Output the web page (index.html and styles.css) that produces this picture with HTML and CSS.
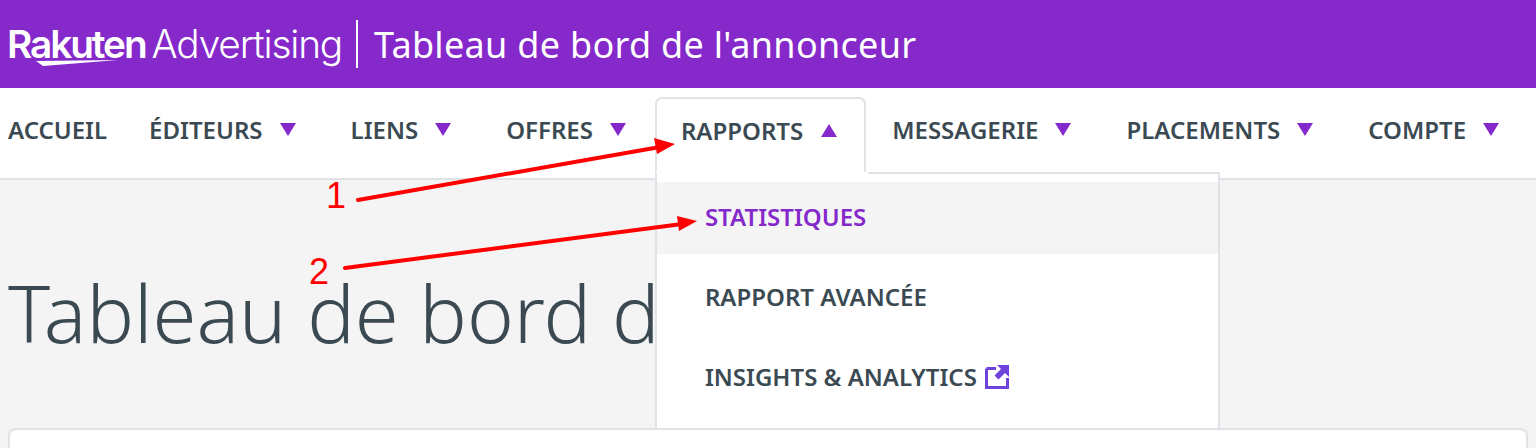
FILE: index.html
```html
<!DOCTYPE html>
<html lang="fr">
<head>
<meta charset="utf-8">
<title>Tableau de bord de l'annonceur</title>
<link rel="stylesheet" href="styles.css">
</head>
<body>
<header class="topbar">
  <div class="logo">
    <span class="logo-rakuten">Rakuten</span><span class="logo-adv">Advertising</span>
    <svg class="logo-swoosh" viewBox="0 0 82 7" width="82" height="7"><path d="M0 1 L82 0 L7 6 Z" fill="#fff"/></svg>
  </div>
  <div class="divider"></div>
  <div class="app-title">Tableau de bord de l'annonceur</div>
</header>
<nav class="nav">
  <a class="nav-item first">ACCUEIL</a>
  <a class="nav-item">ÉDITEURS<i class="caret"></i></a>
  <a class="nav-item">LIENS<i class="caret"></i></a>
  <a class="nav-item">OFFRES<i class="caret"></i></a>
  <div class="nav-item open">RAPPORTS<i class="caret up"></i>
    <div class="dropdown">
      <a class="drop-item active">STATISTIQUES</a>
      <a class="drop-item">RAPPORT AVANCÉE</a>
      <a class="drop-item">INSIGHTS &amp; ANALYTICS
        <svg class="ext" viewBox="0 0 24 24" width="24" height="24"><path d="M1.500 3.500H11M1.500 3.500V22.500H22.500V13" fill="none" stroke="#6f42dc" stroke-width="3"/><path d="M12 0H24V12L20 8L13.500 14.500L9.500 10.500L16 4Z" fill="#6f42dc"/></svg>
      </a>
    </div>
  </div>
  <a class="nav-item">MESSAGERIE<i class="caret"></i></a>
  <a class="nav-item">PLACEMENTS<i class="caret"></i></a>
  <a class="nav-item">COMPTE<i class="caret"></i></a>
</nav>
<main class="content">
  <h1 class="page-title">Tableau de bord de l'annonceur</h1>
  <section class="card"></section>
</main>
<svg class="arrows" viewBox="0 0 1536 448" width="1536" height="448">
  <g stroke="#fe0000" stroke-width="4" stroke-linecap="round"><path d="M358 200L660 147"/><path d="M345 268L682 224"/></g>
  <path d="M675 144L654 138L657 154Z" fill="#fe0000"/>
  <path d="M697 221L677 216L679 231Z" fill="#fe0000"/>
</svg>
<span class="num n1">1</span>
<span class="num n2">2</span>
</body>
</html>
```
FILE: styles.css
```css
* { box-sizing: border-box; }
html, body { margin: 0; height: 448px; overflow: hidden; }
body { font-family: "Noto Sans", "Open Sans", sans-serif; background: #f4f4f4; color: #3b4a52; position: relative; }
.topbar { height: 88px; background: #8529cb; display: flex; align-items: center; color: #fff; }
.logo { display: flex; align-items: baseline; position: relative; margin-left: 7px; width: 334px; font-family: Inter, sans-serif; font-size: 38.8px; line-height: 46px; color: #fff; }
.logo-rakuten { font-weight: 600; letter-spacing: -2.1px; }
.logo-adv { font-weight: 300; letter-spacing: -1.15px; margin-left: 6px; }
.logo-swoosh { position: absolute; left: 29px; top: 39px; }
.divider { width: 2px; height: 48px; background: #fff; margin-left: 15px; }
.app-title { font-size: 36px; margin-left: 16px; letter-spacing: .3px; }
.nav { height: 92px; background: #fff; border-bottom: 2px solid #dfe3e7; display: flex; padding-top: 9px; }
.nav-item { display: flex; align-items: center; height: 67px; padding: 0 29px 2px 26px; font-size: 24px; font-weight: 600; white-space: nowrap; position: relative; }
.nav-item.first { padding: 0 16px 2px 8px; }
.caret { display: block; width: 0; height: 0; margin-left: 17px; border-left: 8.500px solid transparent; border-right: 8.500px solid transparent; border-top: 13px solid #8529cb; }
.caret.up { margin-left: 18px; border-top: 0; border-bottom: 13px solid #8529cb; }
.nav-item.open { height: 84px; align-self: flex-start; background: #fff; border: 2px solid #dfe3e7; border-bottom: 0; border-radius: 7px 7px 0 0; padding: 0 27px 19px 24px; margin-bottom: -2px; z-index: 2; }
.dropdown { position: absolute; left: -2px; top: 73px; width: 565px; height: 258px; background: #fff; border: 2px solid #dfe3e7; border-top: 2px solid transparent; padding-top: 8px; }
.dropdown::before { content: ""; position: absolute; left: 211px; right: -2px; top: -2px; height: 2px; background: #dfe3e7; }
.drop-item { display: flex; align-items: center; gap: 8px; height: 72px; padding: 0 0 4px 48px; margin-bottom: 8px; }
.drop-item.active { background: #f4f4f4; color: #8529cb; }
.ext { display: block; margin-top: 2px; }
.content { padding: 0 8px; }
.page-title { margin: 79px 0 0; height: 169px; font-size: 79.5px; line-height: 106px; font-weight: 300; color: #3b4a52; white-space: nowrap; overflow: hidden; }
.card { height: 20px; background: #fff; border: 2px solid #dfe3e7; border-bottom: 0; border-radius: 8px 8px 0 0; }
.arrows { position: absolute; left: 0; top: 0; pointer-events: none; z-index: 5; }
.num { position: absolute; z-index: 5; color: #fe0000; font-family: "Liberation Sans", sans-serif; font-size: 36px; line-height: 40px; }
.n1 { left: 326px; top: 176px; }
.n2 { left: 309px; top: 252px; }
```
